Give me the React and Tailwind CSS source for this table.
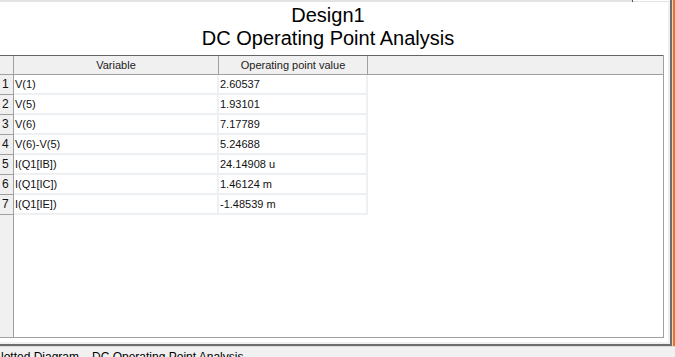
import React from "react";

const rows = [
  ["1", "V(1)", "2.60537"],
  ["2", "V(5)", "1.93101"],
  ["3", "V(6)", "7.17789"],
  ["4", "V(6)-V(5)", "5.24688"],
  ["5", "I(Q1[IB])", "24.14908 u"],
  ["6", "I(Q1[IC])", "1.46124 m"],
  ["7", "I(Q1[IE])", "-1.48539 m"],
];

const App = () => {
  return (
    <div className="w-[675px] h-[357px] overflow-hidden bg-[#f0f0f0] flex flex-col font-['Liberation_Sans',Arial,sans-serif] text-black">
      <div className="flex h-[347px]">
        {/* document window */}
        <div className="w-[672px] h-[346px] bg-white border-r-2 border-b-2 border-[#6d6d6d] flex flex-col">
          <div className="flex h-[2px]">
            <div className="w-[632px] bg-[#e3e3e3]" />
            <div className="w-[1px] bg-[#555555]" />
            <div className="flex-1 border-b border-[#e3e3e3]" />
          </div>
          <div className="flex-1 flex flex-col border-r-2 border-b-2 border-[#f0f0f0] pr-[4px] pb-[4px]">
            <div className="pt-[2px] pb-[5px] pr-[8px] text-center text-[20px] leading-[23px]">
              <div>Design1</div>
              <div>DC Operating Point Analysis</div>
            </div>
            <div className="flex-1 flex flex-col border-r border-b border-[#a0a0a0] text-[11px] text-[#111]">
              {/* header */}
              <div className="flex h-[20px] bg-[#f0f0f0] border-t border-b border-t-[#646464] border-b-[#a0a0a0]">
                <div className="w-[14px] border-r border-[#a0a0a0]" />
                <div className="w-[205px] border-r border-[#a0a0a0] flex items-center justify-center text-[#222]">
                  Variable
                </div>
                <div className="w-[149px] border-r border-[#a0a0a0] flex items-center justify-center text-[#222]">
                  Operating point value
                </div>
                <div className="flex-1" />
              </div>
              {rows.map(([n, v, val]) => (
                <div key={n} className="flex h-[20px]">
                  <div className="w-[14px] bg-[#f0f0f0] border-r border-b border-[#a0a0a0] pl-[2px] text-[12px] leading-[19px]">
                    {n}
                  </div>
                  <div className="w-[205px] border-r-2 border-b-2 border-[#eef1f4] pl-[1px] leading-[18px]">
                    {v}
                  </div>
                  <div className="w-[149px] border-r-2 border-b-2 border-[#eef1f4] pl-[1px] leading-[18px]">
                    {val}
                  </div>
                  <div className="flex-1" />
                </div>
              ))}
              <div className="flex-1 flex">
                <div className="w-[14px] bg-[#f0f0f0] border-r border-[#a0a0a0]" />
                <div className="flex-1" />
              </div>
            </div>
          </div>
        </div>
        <div className="w-[1px] h-[346px] bg-[#d8d8d8]" />
        <div className="w-[2px] bg-[#f07020]" />
      </div>
      {/* tab bar */}
      <div className="flex-1 border-t border-[#dadada] flex text-[12px] leading-[14px] pt-[3px] pl-[1px] whitespace-nowrap">
        <div className="w-[91px]">lotted Diagram</div>
        <div>DC Operating Point Analysis</div>
      </div>
    </div>
  );
};

export default App;
